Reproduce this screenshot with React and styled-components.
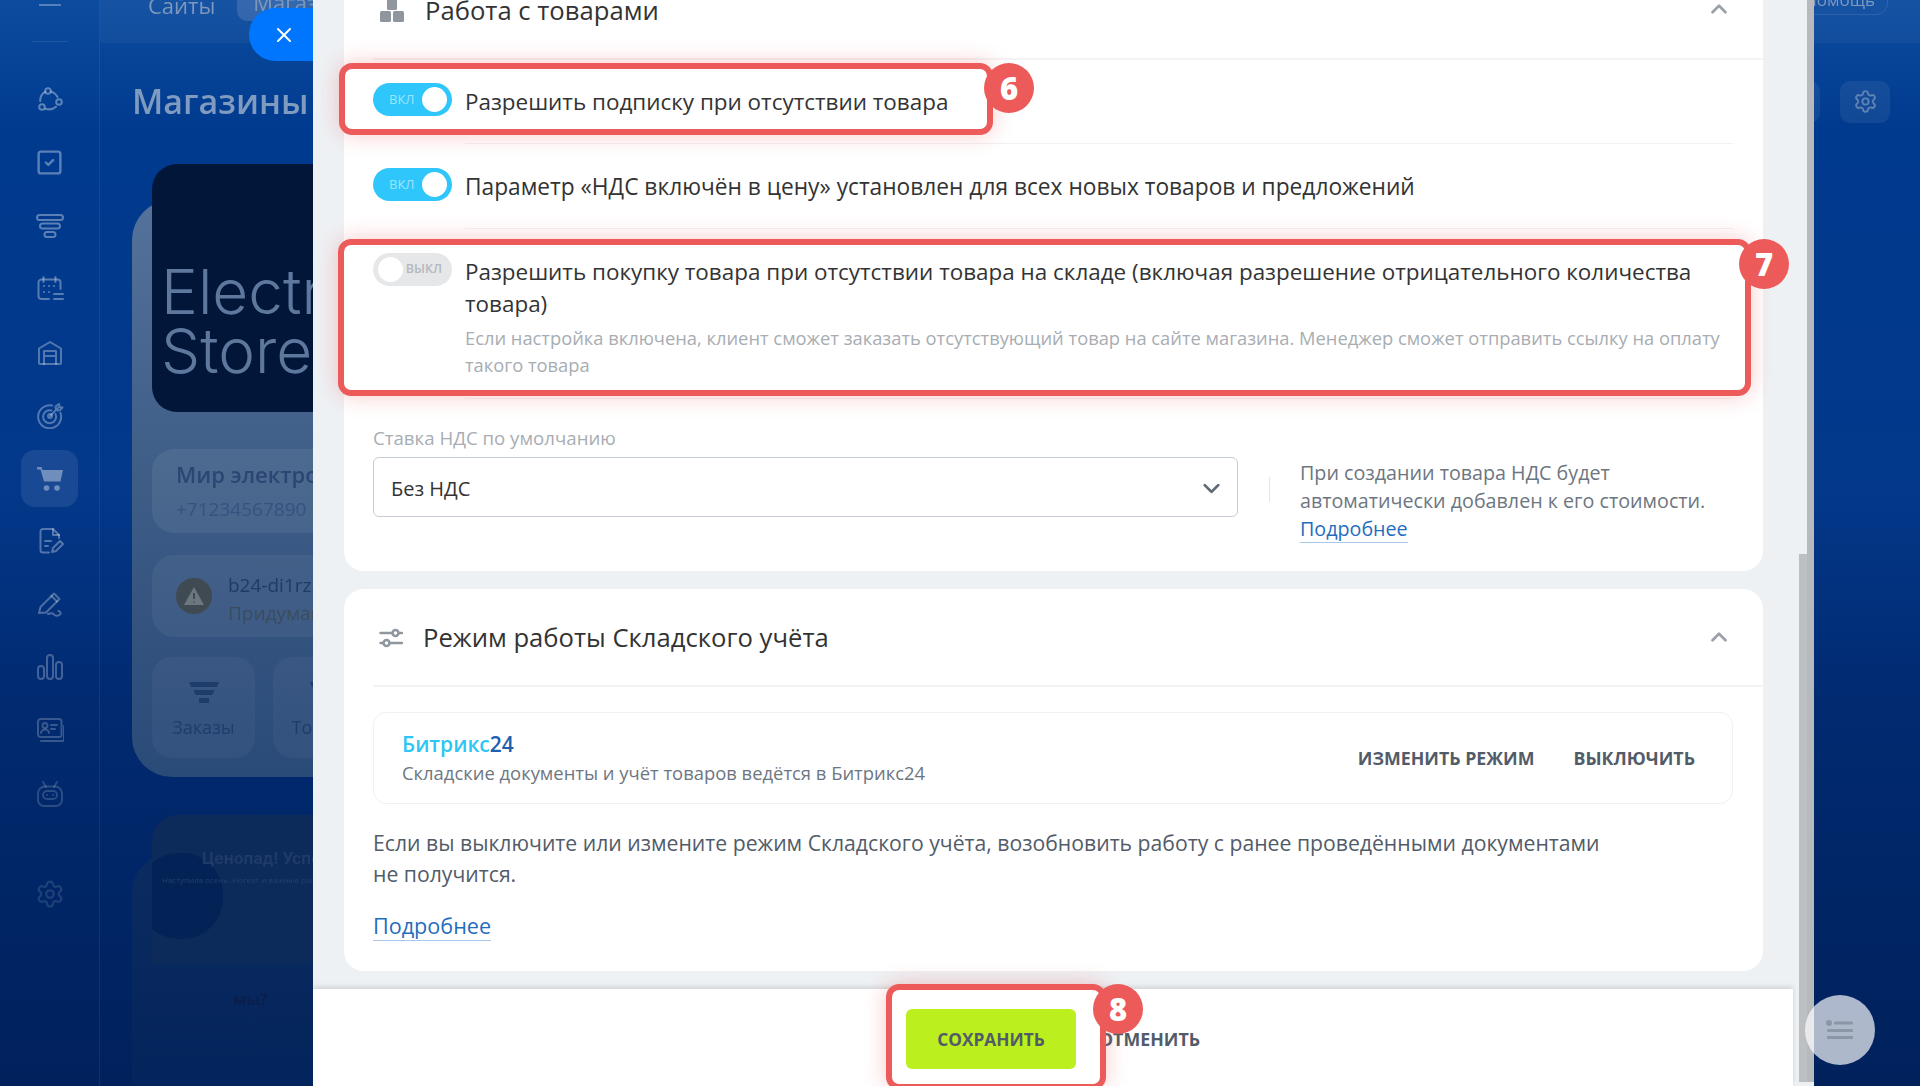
import React from "react";
import styled, { createGlobalStyle } from "styled-components";
import { ChevronDown, ChevronUp, X, Settings, SquareCheck } from "lucide-react";

const Global = createGlobalStyle`
  html, body { margin: 0; padding: 0; height: 100%; overflow: hidden; }
  #root { height: 100%; }
  * { box-sizing: border-box; }
  body { font-family: "Open Sans", "Noto Sans", "Liberation Sans", sans-serif; }
`;

const Screen = styled.div`
  position: relative; width: 1920px; height: 1086px; overflow: hidden; background: #002a70;
`;
const Page = styled.div`
  display: flex; width: 100%; height: 100%; filter: blur(0.7px);
  background: linear-gradient(180deg, #0c4c9f 0%, #003a8e 12%, #03388a 45%, #012a70 65%, #00215c 100%);
`;
const Sidebar = styled.aside`
  flex: 0 0 100px; display: flex; flex-direction: column; align-items: center;
  border-right: 1px solid rgba(255,255,255,.07);
`;
const Burger = styled.div`
  width: 22px; height: 2px; margin-top: 4px; background: rgba(255,255,255,.3);
`;
const SideRule = styled.div`
  width: 36px; height: 1px; margin-top: 35px; margin-bottom: 29px; background: rgba(255,255,255,.1);
`;
const SideItem = styled.div`
  width: 57px; height: 57px; margin-bottom: 6.1px; display: flex; align-items: center; justify-content: center;
  border-radius: 14px; color: rgba(255,255,255,${p => p.$a});
  background: ${p => (p.$active ? "rgba(255,255,255,.09)" : "transparent")};
`;
const SideGear = styled(SideItem)`
  margin-top: 37px;
`;

const Main = styled.main`
  flex: 1; min-width: 0; display: flex; flex-direction: column; overflow: hidden;
`;
const TopBar = styled.div`
  flex: 0 0 43px; display: flex; align-items: flex-start; justify-content: space-between;
  padding: 0 32px 0 48px; background: rgba(255,255,255,.045); font-size: 22px; color: #7d97bd;
`;
const TabGroup = styled.div`
  display: flex; align-items: flex-end; gap: 22px; margin-top: -14px;
`;
const TabText = styled.div`
  line-height: 32px;
`;
const TabPill = styled.div`
  height: 35px; padding: 0 16px; line-height: 32px; border-radius: 10px; background: rgba(255,255,255,.13);
`;
const HelpPill = styled.div`
  height: 30px; margin-top: -15px; padding: 0 12px; line-height: 28px; font-size: 17px;
  border: 1px solid rgba(255,255,255,.1); border-radius: 12px;
`;
const TitleRow = styled.div`
  flex: 0 0 43px; display: flex; align-items: center; justify-content: space-between;
  margin: 37px 30px 77px 32px;
`;
const PageTitle = styled.h1`
  margin: 0; font-size: 34px; line-height: 43px; font-weight: 600; color: #7f9bc0;
`;
const RoundTools = styled.div`
  display: flex; gap: 20px;
`;
const ToolBtn = styled.div`
  width: 50px; height: 42px; display: flex; align-items: center; justify-content: center;
  border-radius: 10px; background: rgba(255,255,255,.07); color: #5f83b4;
`;
const ShopCard = styled.section`
  flex: 0 0 auto; width: 900px; margin-left: 32px; padding: 0 20px 19px;
  border-radius: 40px; background: linear-gradient(180deg, #54729a 0%, #3d5c86 50%, #2a4a78 100%);
`;
const LogoTile = styled.div`
  height: 248px; margin-top: -36px; padding: 98px 0 0 9px; border-radius: 25px; background: #011638;
  font-family: "Inter", sans-serif; font-weight: 300; font-size: 62px; line-height: 59px; color: #5d779d;
`;
const InfoCard = styled.div`
  height: 84px; margin-top: 37px; padding: 10px 24px; border-radius: 22px; background: rgba(255,255,255,.07);
  color: #2b4672;
`;
const InfoName = styled.div`
  font-size: 22px; font-weight: 600; line-height: 30px;
`;
const InfoPhone = styled.div`
  margin-top: 6px; font-size: 19px; line-height: 28px; color: #365380;
`;
const WarnCard = styled.div`
  height: 82px; margin-top: 22px; padding: 6px 24px 0; display: flex; align-items: center; gap: 16px;
  border-radius: 22px; background: rgba(255,255,255,.05); color: #1e3b68;
`;
const WarnDot = styled.div`
  flex: 0 0 36px; height: 36px; margin-top: -6px; border-radius: 50%; background: #3f4a52; display: flex; align-items: center; justify-content: center;
`;
const WarnText = styled.div`
  font-size: 19px; line-height: 28px;
`;
const WarnSub = styled.div`
  color: #3b4c5e; font-weight: 500;
`;
const TileRow = styled.div`
  display: flex; gap: 18px; margin-top: 20px;
`;
const NavTile = styled.div`
  width: 103px; height: 101px; padding-top: 24px; display: flex; flex-direction: column; align-items: center; gap: 10px;
  border-radius: 20px; background: rgba(255,255,255,.04); color: #1f3d6b; font-size: 18px;
`;
const PromoWrap = styled.section`
  flex: 1; width: 900px; margin: 76px 0 0 32px; padding: 0 20px;
  border-radius: 40px 40px 0 0; background: linear-gradient(180deg, #0c2c60 0%, #03245c 100%);
`;
const Promo = styled.div`
  position: relative; height: 149px; margin-top: -38px; padding: 33px 0 0 50px; overflow: hidden;
  border-radius: 25px 25px 0 0; background: #0c2a5a;
`;
const PromoBlob = styled.div`
  position: absolute; left: -14px; top: 38px; width: 85px; height: 86px; border-radius: 48%; background: #032255;
`;
const PromoTitle = styled.div`
  position: relative; font-family: "Inter", sans-serif; font-size: 16px; font-weight: 700; color: #1e3b69;
`;
const PromoLine = styled.div`
  position: relative; margin-top: 6px; margin-left: -40px; font-size: 8px; color: #24406e;
`;
const WhoText = styled.div`
  margin: 24px 0 0 81px; font-size: 16px; font-weight: 700; color: #0a1f4c;
`;

const CloseTab = styled.button`
  position: absolute; left: 249px; top: 8px; width: 64px; height: 53px; padding: 0 0 0 6px; border: 0;
  display: flex; align-items: center; justify-content: center; color: #fff;
  border-radius: 27px 0 0 27px; background: #0076ff;
`;
const Modal = styled.div`
  position: absolute; left: 313px; top: 0; bottom: 0; width: 1501px; display: flex; flex-direction: column;
  overflow: hidden; background: #eef1f4;
`;
const ScrollTrack = styled.div`
  position: absolute; right: 0; top: 0; bottom: 4px; width: 7px; background: #b6babd;
`;
const ScrollThumb = styled.div`
  position: absolute; right: 7px; top: 554px; bottom: 4px; width: 8px; background: #bcc0c3;
`;
const Scroller = styled.div`
  flex: 1; min-height: 0; overflow: hidden; padding-left: 31px;
`;
const Stack = styled.div`
  width: 1419px; margin-top: -38px; display: flex; flex-direction: column; gap: 18px;
`;
const Card = styled.section`
  border-radius: 20px; background: #fff; padding: 0 30px 0 29px;
`;
const CardHead = styled.header`
  height: 98px; margin-right: -30px; padding: 1px 31px 0 6px; display: flex; align-items: center; gap: 20px;
  border-bottom: 2px solid #f2f3f5; color: #333;
`;
const HeadTitle = styled.h2`
  flex: 1; margin: 0; font-size: 25.65px; font-weight: 400; color: #333;
`;
const Chevron = styled.span`
  display: flex; margin-top: ${p => p.$mt || 0}px; color: #9aa1a8;
`;
const Row = styled.div`
  position: relative; display: flex; gap: 13px; padding-top: 24px;
`;
const FirstRow = styled(Row)`
  margin-top: -1px;
`;
const Toggle = styled.div`
  flex: 0 0 79px; height: 33px; padding: ${p => (p.$on ? "0 5px 0 16px" : "0 10px 0 5px")}; display: flex; align-items: center;
  justify-content: space-between; flex-direction: ${p => (p.$on ? "row" : "row-reverse")};
  border-radius: 17px; background: ${p => (p.$on ? "#2ec6fb" : "#e6e7e9")};
  font-size: ${p => (p.$on ? 13 : 12.5)}px; line-height: 1; font-weight: ${p => (p.$on ? 400 : 600)};
  color: ${p => (p.$on ? "rgba(255,255,255,.55)" : "#b5b8bd")};
`;
const Knob = styled.span`
  width: 25px; height: 25px; border-radius: 50%; background: #fff;
`;
const RowBody = styled.div`
  flex: 1; padding: 3px 0 ${p => p.$pb}px; border-bottom: 1px solid #f1f2f4;
`;
const RowText = styled.div`
  font-size: ${p => p.$fs || 22.45}px; line-height: 32px; color: #333;
`;
const RowSub = styled.div`
  margin-top: 4px; font-size: 18.32px; line-height: 27px; color: #a8adb3;
`;
const Mark = styled.div`
  position: absolute; border: 6px solid #ec5a5a; border-radius: 13px; pointer-events: none;
  box-shadow: 0 0 22px rgba(236,90,90,.32);
  top: ${p => p.$t}px; left: ${p => p.$l}px; right: ${p => p.$r}px; bottom: ${p => p.$b}px;
`;
const Badge = styled.div`
  position: absolute; width: 50px; height: 50px; border-radius: 50%; background: #ec5a5a; color: #fff;
  display: flex; align-items: center; justify-content: center; font-size: 31px; font-weight: 800; line-height: 1;
  top: ${p => p.$t}px; right: ${p => p.$r}px;
`;
const VatRow = styled.div`
  display: flex; margin-top: 27px; padding-bottom: 28px;
`;
const VatField = styled.div`
  flex: 0 0 865px;
`;
const FieldLabel = styled.div`
  height: 31px; font-size: 18.65px; line-height: 24px; color: #a8adb3;
`;
const SelectBox = styled.div`
  height: 60px; padding: 2px 12px 0 17px; display: flex; align-items: center; justify-content: space-between;
  border: 1px solid #c6cdd5; border-radius: 6px; font-size: 20px; color: #333;
`;
const VatSide = styled.div`
  display: flex; padding-top: 33px;
`;
const Sep = styled.div`
  width: 1px; height: 25px; margin: 18px 30px 0 31px; background: #e3e6e9;
`;
const HelpText = styled.div`
  font-size: 19.7px; line-height: 28px; color: #6d7681;
`;
const Link = styled.a`
  color: #1f6dbd; border-bottom: 1px solid #a7c8ea;
`;
const ModeBox = styled.div`
  height: 92px; margin-top: 25px; padding: 0 37px 0 28px; display: flex; align-items: center; justify-content: space-between;
  border: 1px solid #eef1f5; border-radius: 13px;
`;
const ModeName = styled.div`
  font-size: 21px; font-weight: 600; line-height: 30px; color: #2fc6f6;
`;
const ModeNum = styled.span`
  color: #215fb0;
`;
const ModeSub = styled.div`
  font-size: 18.4px; line-height: 28px; color: #6d7681;
`;
const ModeActions = styled.div`
  display: flex; gap: 39px;
`;
const TextAction = styled.span`
  font-size: 17.8px; font-weight: 700; color: #525c69;
`;
const Para = styled.p`
  margin: 23px 0 22px; font-size: 21.2px; line-height: 31px; color: #525c69;
`;
const LinkLine = styled.div`
  padding-bottom: 31px; font-size: 21.6px; line-height: 29px;
`;
const Footer = styled.footer`
  position: relative; flex: 0 0 97px; width: 1480px; display: flex; align-items: center; justify-content: center; gap: 23px;
  padding-top: 3px; background: #fff; box-shadow: 0 -2px 5px rgba(0,0,0,.13);
`;
const SaveWrap = styled.div`
  position: relative;
`;
const SaveBtn = styled.div`
  width: 170px; height: 60px; display: flex; align-items: center; justify-content: center;
  border-radius: 6px; background: #bbef1e; font-size: 17.3px; font-weight: 700; color: #525c69;
`;
const Fab = styled.div`
  position: absolute; left: 1805px; top: 995px; width: 70px; height: 70px; display: flex; align-items: center; justify-content: center;
  border-radius: 50%; background: rgba(255,255,255,.68); color: #8c96a6;
`;

const S = ({ children, size = 28, fill = "none", sw = 2 }) => (
  <svg width={size} height={size} viewBox="0 0 28 28" fill={fill} stroke={fill === "none" ? "currentColor" : "none"} strokeWidth={sw} strokeLinecap="round" strokeLinejoin="round">
    {children}
  </svg>
);
const icons = {
  network: <S><circle cx="12" cy="5" r="2.8" /><circle cx="6" cy="21" r="2.8" /><circle cx="23" cy="16" r="2.8" /><path d="M9.200 5.800C6 7.600 4 11 4.200 15" /><path d="M15 5.600c2.700.7 5 2.700 6.500 5.400" /><path d="M9.500 22.700c3.500 1.200 7.500.6 10.500-2" /></S>,
  funnel: <S><rect x="1" y="3" width="26" height="5" rx="2.500" /><rect x="4" y="11.500" width="20" height="5" rx="2.500" /><rect x="8.500" y="20" width="11" height="5" rx="2.500" /></S>,
  calendar: <S><path d="M13 24H5.500a3 3 0 0 1-3-3V7.500a3 3 0 0 1 3-3h16a3 3 0 0 1 3 3V14" /><path d="M7.500 2v5M19.500 2v5" /><path d="M8 11h.1M13 11h.1M18 11h.1M8 17h.1M13 17h.1" /><path d="M18 19h9M18 24h9" /></S>,
  warehouse: <S><path d="M3 25V10.500L14 4l11 6.500V25a1 1 0 0 1-1 1H4a1 1 0 0 1-1-1Z" /><path d="M8 26V13h12v13M8 18h12" /></S>,
  target: <S><path d="M16 4.500A11.500 11.500 0 1 0 24.500 12" /><path d="M15.500 9.500A6.500 6.500 0 1 0 19.500 13" /><circle cx="14" cy="15" r="2" /><path d="M14 15l8-8M19.500 5.500l.5 3.500 3.500.5 3-3-3-.5-.5-3z" /></S>,
  cart: <S fill="currentColor"><path d="M1 3h4.500l1 3H27l-2.500 11.500H8L4.500 5.500H1z" /><circle cx="10.500" cy="24" r="2.800" /><circle cx="21" cy="24" r="2.800" /></S>,
  doc: <S><path d="M13 25.500H7a2.500 2.500 0 0 1-2.500-2.500V4.500A2.500 2.500 0 0 1 7 2h10l6 6v3" /><path d="M17 2v6h6" /><path d="M9 14h6M9 19h3" /><path d="M16 25l1-4 7-7 3 3-7 7z" /></S>,
  pen: <S><path d="M3 23l1.500-6L18 3.500l5.500 5.500L10 22.500z" /><path d="M15.500 6l5.500 5.500" /><path d="M12 24c3-1 4.500-1.500 6 .5s5 1.500 6.500-.5c.5-1-.5-3-2-3" /></S>,
  bars: <S><rect x="2" y="13" width="6" height="13" rx="3" /><rect x="11" y="2" width="6" height="24" rx="3" /><rect x="20" y="9" width="6" height="17" rx="3" /></S>,
  card: <S><path d="M5 3h18a2.500 2.500 0 0 1 2.500 2.500V19a2 2 0 0 1-2 2H4.500A2.500 2.500 0 0 1 2 18.500V6a3 3 0 0 1 3-3Z" /><circle cx="9" cy="9.500" r="2.500" /><path d="M5 17c0-2 2-3.500 4-3.500s4 1.500 4 3.500" /><path d="M15 9h6M15 13h4" /><path d="M5 25h21a2 2 0 0 0 2-2V10" /></S>,
  robot: <S><path d="M7 2l3 5M21 2l-3 5" /><path d="M9 6.500h10a7 7 0 0 1 7 7V20a6 6 0 0 1-6 6H8a6 6 0 0 1-6-6v-6.500a7 7 0 0 1 7-7Z" /><rect x="7" y="11" width="14" height="8" rx="4" /><path d="M11 15h.1M17 15h.1" /></S>,
};

const BoxesIcon = () => (
  <svg width="26" height="24" viewBox="0 0 26 24" fill="#8f969e">
    <rect x="8" y="0" width="10" height="11" rx="1.500" />
    <rect x="1" y="12" width="11" height="11" rx="1.500" />
    <rect x="14" y="12" width="11" height="11" rx="1.500" />
  </svg>
);
const SlidersIcon = () => (
  <svg width="24" height="24" viewBox="0 0 24 24" fill="none" stroke="#8f969e" strokeWidth="2.500" strokeLinecap="round">
    <path d="M1.500 7h12M20 7h3M1.500 17h3M11 17h12" />
    <circle cx="16.500" cy="7" r="3" />
    <circle cx="7.500" cy="17" r="3" />
  </svg>
);
const FunnelSolid = () => (
  <svg width="30" height="24" viewBox="0 0 30 24" fill="#1f3d6b">
    <path d="M0 1h30l-2 5H2zM4.500 9h21l-2 5h-17zM10 17h10v5H10z" />
  </svg>
);
const WarnIcon = () => (
  <svg width="22" height="20" viewBox="0 0 22 20">
    <path d="M11 1l10 18H1z" fill="#6d7780" />
    <path d="M11 7v6M11 15.500v1" stroke="#3f4a52" strokeWidth="2" />
  </svg>
);
const ListIcon = () => (
  <svg width="28" height="22" viewBox="0 0 28 22" fill="currentColor">
    <circle cx="3" cy="4" r="3" />
    <rect x="8" y="2.500" width="19" height="3" rx="1" />
    <rect x="1" y="10" width="26" height="3" rx="1" />
    <rect x="1" y="17" width="26" height="3" rx="1" />
  </svg>
);

const side = [
  ["network", .36], ["check", .36], ["funnel", .36], ["calendar", .34], ["warehouse", .32], ["target", .32],
  ["cart", .38, true], ["doc", .32], ["pen", .3], ["bars", .26], ["card", .22], ["robot", .17],
];

export default function App() {
  return (
    <Screen>
      <Global />
      <Page>
        <Sidebar>
          <Burger />
          <SideRule />
          {side.map(([name, a, active]) => (
            <SideItem key={name} $a={a} $active={active}>
              {name === "check" ? <SquareCheck size={29} strokeWidth={2} /> : icons[name]}
            </SideItem>
          ))}
          <SideGear $a={0.12}><Settings size={30} strokeWidth={1.800} /></SideGear>
        </Sidebar>
        <Main>
          <TopBar>
            <TabGroup>
              <TabText>Сайты</TabText>
              <TabPill>Магазины</TabPill>
            </TabGroup>
            <HelpPill>Помощь</HelpPill>
          </TopBar>
          <TitleRow>
            <PageTitle>Магазины</PageTitle>
            <RoundTools>
              <ToolBtn />
              <ToolBtn><Settings size={25} strokeWidth={1.800} /></ToolBtn>
            </RoundTools>
          </TitleRow>
          <ShopCard>
            <LogoTile>Electronics<br />Store</LogoTile>
            <InfoCard>
              <InfoName>Мир электроники</InfoName>
              <InfoPhone>+71234567890</InfoPhone>
            </InfoCard>
            <WarnCard>
              <WarnDot><WarnIcon /></WarnDot>
              <WarnText>b24-di1rz5.bitrix24.shop<WarnSub>Придумайте адрес</WarnSub></WarnText>
            </WarnCard>
            <TileRow>
              <NavTile><FunnelSolid />Заказы</NavTile>
              <NavTile><FunnelSolid />Товары</NavTile>
            </TileRow>
          </ShopCard>
          <PromoWrap>
            <Promo>
              <PromoBlob />
              <PromoTitle>Ценопад! Успейте купить</PromoTitle>
              <PromoLine>Наступила осень. Florеат и важные растения</PromoLine>
            </Promo>
            <WhoText>мы?</WhoText>
          </PromoWrap>
        </Main>
      </Page>

      <CloseTab><X size={24} strokeWidth={2} /></CloseTab>

      <Modal>
        <Scroller>
          <Stack>
            <Card>
              <CardHead>
                <BoxesIcon />
                <HeadTitle>Работа с товарами</HeadTitle>
                <Chevron $mt={-3}><ChevronUp size={26} strokeWidth={2.500} /></Chevron>
              </CardHead>
              <FirstRow>
                <Toggle $on>ВКЛ<Knob /></Toggle>
                <RowBody $pb={25}><RowText>Разрешить подписку при отсутствии товара</RowText></RowBody>
                <Mark $t={4} $l={-34} $r={740} $b={9}>
                  <Badge $t={-6} $r={-47}>6</Badge>
                </Mark>
              </FirstRow>
              <Row>
                <Toggle $on>ВКЛ<Knob /></Toggle>
                <RowBody $pb={25}><RowText $fs={22.72}>Параметр «НДС включён в цену» установлен для всех новых товаров и предложений</RowText></RowBody>
              </Row>
              <Row>
                <Toggle>ВЫКЛ<Knob /></Toggle>
                <RowBody $pb={20}>
                  <RowText>Разрешить покупку товара при отсутствии товара на складе (включая разрешение отрицательного количества товара)</RowText>
                  <RowSub>Если настройка включена, клиент сможет заказать отсутствующий товар на сайте магазина. Менеджер сможет отправить ссылку на оплату такого товара</RowSub>
                </RowBody>
                <Mark $t={10} $l={-35} $r={-18} $b={3}>
                  <Badge $t={-6} $r={-44}>7</Badge>
                </Mark>
              </Row>
              <VatRow>
                <VatField>
                  <FieldLabel>Ставка НДС по умолчанию</FieldLabel>
                  <SelectBox>Без НДС<Chevron><ChevronDown size={27} strokeWidth={2.500} color="#5f6874" /></Chevron></SelectBox>
                </VatField>
                <VatSide>
                  <Sep />
                  <HelpText>При создании товара НДС будет<br />автоматически добавлен к его стоимости.<br /><Link>Подробнее</Link></HelpText>
                </VatSide>
              </VatRow>
            </Card>
            <Card>
              <CardHead>
                <SlidersIcon />
                <HeadTitle>Режим работы Складского учёта</HeadTitle>
                <Chevron $mt={-2}><ChevronUp size={26} strokeWidth={2.500} /></Chevron>
              </CardHead>
              <ModeBox>
                <div>
                  <ModeName>Битрикс<ModeNum>24</ModeNum></ModeName>
                  <ModeSub>Складские документы и учёт товаров ведётся в Битрикс24</ModeSub>
                </div>
                <ModeActions>
                  <TextAction>ИЗМЕНИТЬ РЕЖИМ</TextAction>
                  <TextAction>ВЫКЛЮЧИТЬ</TextAction>
                </ModeActions>
              </ModeBox>
              <Para>Если вы выключите или измените режим Складского учёта, возобновить работу с ранее проведёнными документами<br />не получится.</Para>
              <LinkLine><Link>Подробнее</Link></LinkLine>
            </Card>
          </Stack>
        </Scroller>
        <Footer>
          <SaveWrap>
            <SaveBtn>СОХРАНИТЬ</SaveBtn>
            <Mark $t={-25} $l={-20} $r={-30} $b={-21}>
              <Badge $t={-6} $r={-43}>8</Badge>
            </Mark>
          </SaveWrap>
          <TextAction>ОТМЕНИТЬ</TextAction>
        </Footer>
        <ScrollThumb />
        <ScrollTrack />
      </Modal>

      <Fab><ListIcon /></Fab>
    </Screen>
  );
}
